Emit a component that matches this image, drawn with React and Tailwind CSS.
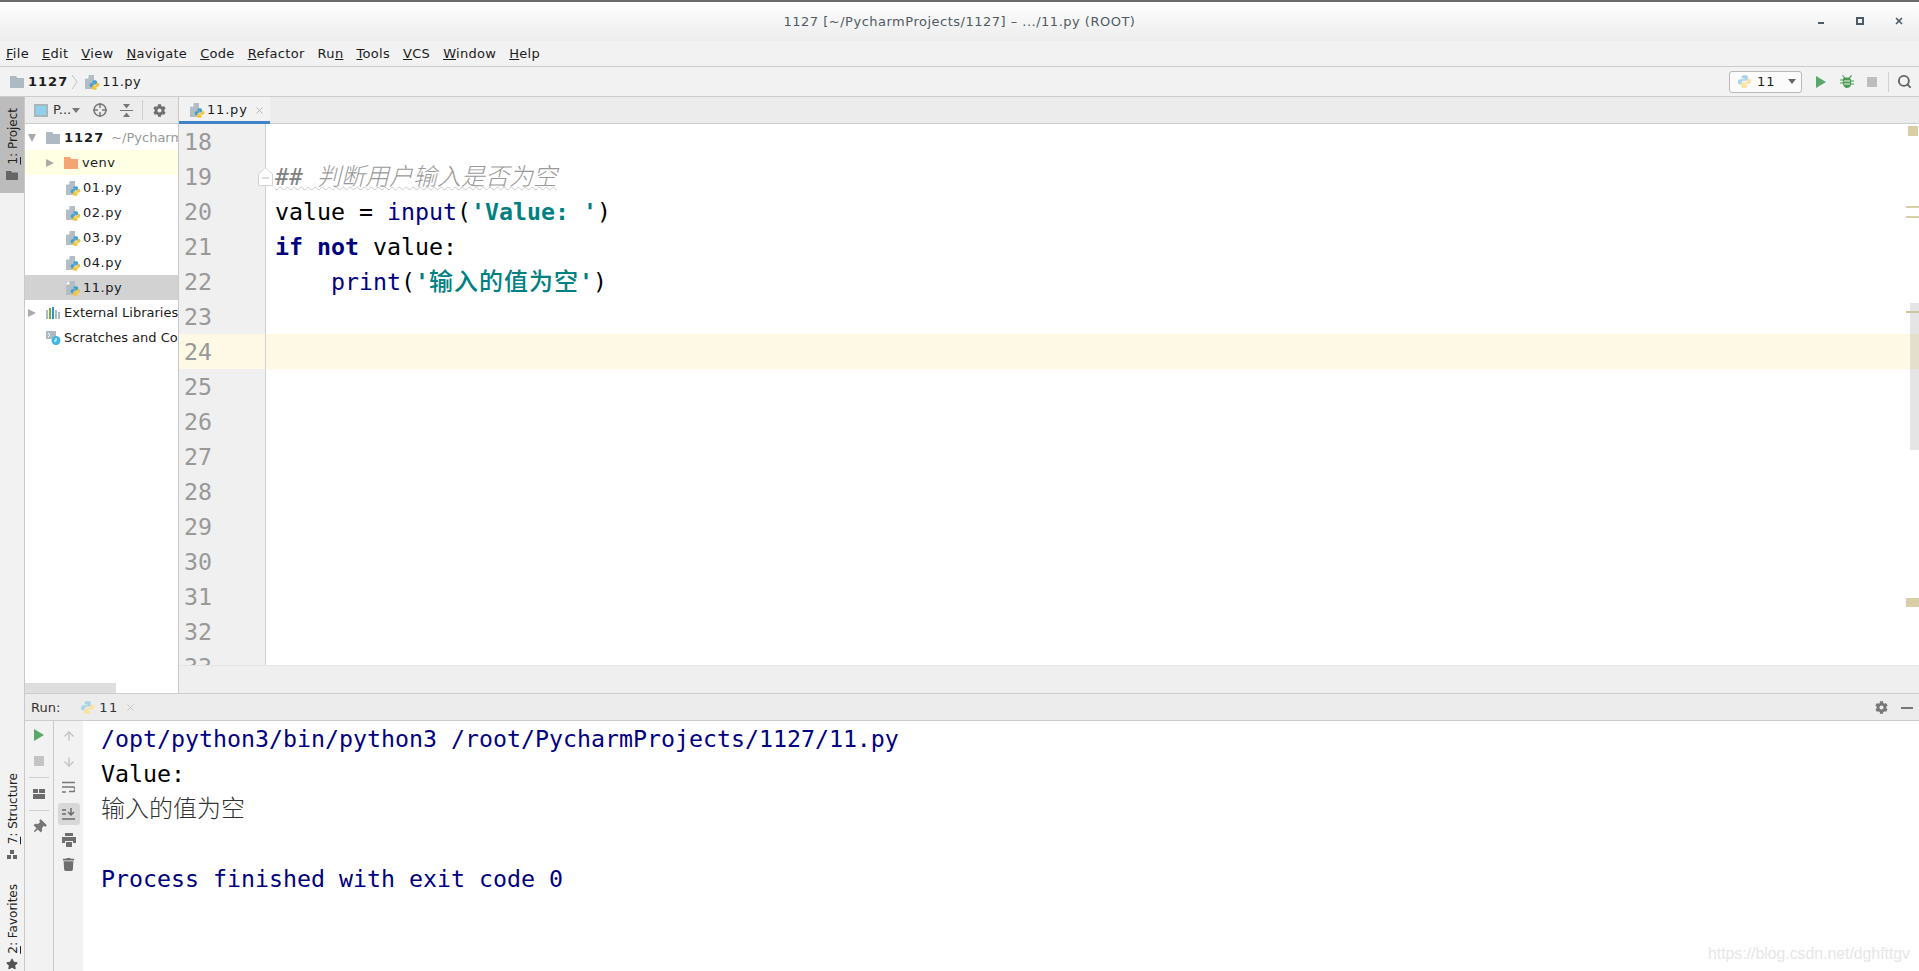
import { ArrowDown, ArrowUp, Search, X } from 'lucide-react'
import { FaCog, FaStar, FaThumbtack, FaTrash } from 'react-icons/fa'

const UI = "font-['DejaVu_Sans',sans-serif]"
const MONO = "font-['DejaVu_Sans_Mono','Noto_Sans_CJK_SC',monospace]"
const CJK = "font-['Noto_Sans_CJK_SC',sans-serif] text-[24px] font-light leading-none"

const MENU = [
  ['F', 'ile'],
  ['E', 'dit'],
  ['V', 'iew'],
  ['N', 'avigate'],
  ['C', 'ode'],
  ['R', 'efactor'],
  ['R', 'u', 'n'],
  ['T', 'ools'],
  ['V', 'CS'],
  ['W', 'indow'],
  ['H', 'elp'],
]

const LINES = [18, 19, 20, 21, 22, 23, 24, 25, 26, 27, 28, 29, 30, 31, 32, 33]
const FILES = ['01.py', '02.py', '03.py', '04.py']

function PyLogo({ className, faded }) {
  return (
    <svg viewBox="0 0 16 16" className={className}>
      <path
        d="M8 1C5.2 1 5 2.2 5 3v1.8h3.2v.7H3.4C2 5.5 1 6.6 1 8.2s1 2.9 2.4 2.9H5V9.4c0-1.2 1-2.2 2.2-2.2h2.6c1 0 1.8-.8 1.8-1.8V3c0-1.2-1.4-2-3.6-2z"
        fill={faded ? '#a9d3ea' : '#3f9ed1'}
      />
      <path
        d="M8 15c2.8 0 3-1.2 3-2v-1.8H7.8v-.7h4.8c1.4 0 2.4-1.1 2.4-2.7s-1-2.9-2.4-2.9H11v1.7c0 1.2-1 2.2-2.2 2.2H6.2c-1 0-1.8.8-1.8 1.8V13c0 1.2 1.4 2 3.6 2z"
        fill={faded ? '#f8e3a0' : '#f4c430'}
      />
    </svg>
  )
}

function PyFile() {
  return (
    <span className="relative block w-[14px] h-[16px] shrink-0">
      <svg viewBox="0 0 14 16" className="absolute left-0 top-0 w-[14px] h-[16px]">
        <path d="M4 1h5v14H0V5z" fill="#b3bdc5" />
        <path d="M3.4 1v3.4H0z" fill="#fff" />
      </svg>
      <PyLogo className="absolute left-[4px] top-[5px] w-[11px] h-[12px]" />
    </span>
  )
}

function Folder({ color = '#aebac3' }) {
  return (
    <svg viewBox="0 0 14 12" className="w-[14px] h-[12px] shrink-0">
      <path d="M0 0h6l1.5 2H14v10H0z" fill={color} />
    </svg>
  )
}

function Triangle({ open }) {
  return (
    <svg viewBox="0 0 8 8" className="w-[8px] h-[8px] shrink-0">
      <path d={open ? 'M0 0h8L4 8z' : 'M0 0l8 4-8 4z'} fill="#aaaaaa" />
    </svg>
  )
}

function Play({ className }) {
  return (
    <svg viewBox="0 0 10 12" className={className}>
      <path d="M0 0l10 6-10 6z" fill="#59a869" />
    </svg>
  )
}

function Bug() {
  return (
    <svg viewBox="0 0 14 14" className="w-[14px] h-[14px]">
      <path d="M3 0l2 2.5h4L11 0l1 .8-2 2.4c.7.6 1 1.400 1.200 2.300H14v1h-2.800v2H14v1h-2.900c-.3 2-1.900 3.500-4.100 3.500S3.200 11 2.900 8.500H0v-1h2.800v-2H0v-1h2.800c.2-.9.500-1.700 1.200-2.300L2 .8z" fill="#499c54" />
      <path d="M4 6h6M4 9h6" stroke="#f2f2f2" strokeWidth="1" />
    </svg>
  )
}

function StripeLabel({ under, rest, icon, className = '' }) {
  return (
    <div className={`flex flex-col items-center w-full ${className}`}>
      <span className={`${UI} text-[12px] text-[#222] rotate-180 [writing-mode:vertical-rl] whitespace-nowrap translate-x-px`}>
        <span className="underline">{under}</span>: {rest}
      </span>
      {icon}
    </div>
  )
}

function TitleBar() {
  return (
    <div className="relative h-[41px] shrink-0 border-t-2 border-[#6b6b6b] bg-gradient-to-b from-white to-[#ececec] flex items-center justify-center">
      <span className={`${UI} text-[13px] font-medium text-[#4f5b62] tracking-[0.5px]`}>
        1127 [~/PycharmProjects/1127] – .../11.py (ROOT)
      </span>
      <div className="absolute right-[15px] top-[15px] flex items-center h-[8px]">
        <span className="block w-[6px] h-[2px] bg-[#4a5a66] mt-[4px]" />
        <span className="block w-[8px] h-[8px] border-2 border-[#4a5a66] ml-[32px]" />
        <X size={10} strokeWidth={4} className="ml-[30px] text-[#4a5a66]" />
      </div>
    </div>
  )
}

function MenuBar() {
  return (
    <div className={`${UI} h-[25px] shrink-0 bg-[#f2f2f2] flex items-center pl-[6px] pt-px gap-[13px] text-[13px] text-[#1c1c1c] tracking-[0.3px]`}>
      {MENU.map(([a, b, c], i) => (
        <span key={i}>
          {c ? (
            <>
              {a}
              {b[0]}
              <span className="underline">{c}</span>
            </>
          ) : (
            <>
              <span className="underline">{a}</span>
              {b}
            </>
          )}
        </span>
      ))}
    </div>
  )
}

function NavBar() {
  return (
    <div className={`${UI} h-[31px] shrink-0 bg-[#f2f2f2] border-y border-[#cdcdcd] flex items-center pl-[10px] pr-[7px] text-[13px] text-[#1c1c1c]`}>
      <Folder />
      <span className="ml-[4px] font-bold tracking-[1px]">1127</span>
      <svg viewBox="0 0 6 14" className="w-[6px] h-[14px] ml-[4px] mr-[7px]">
        <path d="M0 0l5 7-5 7" fill="none" stroke="#c4c4c4" />
      </svg>
      <PyFile />
      <span className="ml-[3px] tracking-[0.5px]">11.py</span>
      <div className="ml-auto flex items-center">
        <div className="w-[73px] h-[22px] rounded-[3px] border border-[#b9b9b9] bg-[#fbfbfb] flex items-center pl-[7px] pr-[5px]">
          <PyLogo faded className="w-[15px] h-[15px]" />
          <span className="ml-[5px] tracking-[1px]">11</span>
          <svg viewBox="0 0 8 5" className="w-[8px] h-[5px] ml-auto">
            <path d="M0 0h8L4 5z" fill="#666" />
          </svg>
        </div>
        <Play className="w-[10px] h-[12px] ml-[14px]" />
        <span className="ml-[14px]">
          <Bug />
        </span>
        <span className="block w-[10px] h-[10px] bg-[#bdbdbd] ml-[13px]" />
        <span className="block w-px h-[20px] bg-[#d0d0d0] ml-[11px]" />
        <Search size={15} strokeWidth={3} className="ml-[8px] text-[#5e6468]" />
      </div>
    </div>
  )
}

function LeftStripe() {
  return (
    <div className="w-[25px] shrink-0 bg-[#f2f2f2] border-r border-[#c9c9c9] flex flex-col">
      <div className="h-[96px] bg-[#bcbcbc] flex flex-col items-center pt-[11px]">
        <span className={`${UI} text-[12px] text-[#222] rotate-180 [writing-mode:vertical-rl] whitespace-nowrap translate-x-px`}>
          <span className="underline">1</span>: Project
        </span>
        <svg viewBox="0 0 12 9" className="w-[12px] h-[9px] mt-[6px]">
          <path d="M0 0h5l1 1.500h6V9H0z" fill="#666" />
        </svg>
      </div>
      <div className="mt-auto flex flex-col items-center pb-[1px]">
        <StripeLabel
          under="7"
          rest="Structure"
          icon={
            <svg viewBox="0 0 10 9" className="w-[10px] h-[9px] mt-[6px]">
              <path d="M3 0h4v4H3zM0 5h4v4H0zM6 5h4v4H6z" fill="#666" />
            </svg>
          }
        />
        <StripeLabel
          className="mt-[25px]"
          under="2"
          rest="Favorites"
          icon={<FaStar size={12} className="mt-[4px] text-[#555]" />}
        />
      </div>
    </div>
  )
}

function TreeRow({ className, children }) {
  return <div className={`h-[25px] flex items-center whitespace-nowrap ${className}`}>{children}</div>
}

function ProjectPanel() {
  return (
    <div className="relative w-[154px] shrink-0 bg-white border-r border-[#c9c9c9] flex flex-col overflow-hidden">
      <div className={`${UI} h-[27px] shrink-0 bg-[#ececec] border-b border-[#cdcdcd] flex items-center pl-[9px] text-[13px] text-[#333]`}>
        <span className="block w-[14px] h-[13px] border-2 border-[#a9b4bb] bg-[#8fd0ec]" />
        <span className="ml-[5px]">P...</span>
        <svg viewBox="0 0 8 5" className="w-[8px] h-[5px] ml-[1px]">
          <path d="M0 0h8L4 5z" fill="#777" />
        </svg>
        <svg viewBox="0 0 14 14" className="w-[14px] h-[14px] ml-[13px]">
          <circle cx="7" cy="7" r="6" fill="none" stroke="#777" strokeWidth="1.500" />
          <path d="M7 0v5M7 9v5M0 7h5M9 7h5" stroke="#777" strokeWidth="1.500" />
        </svg>
        <svg viewBox="0 0 13 13" className="w-[13px] h-[13px] ml-[13px]">
          <path d="M0 6.500h13" stroke="#777" />
          <path d="M3 0h7L6.500 4.500zM3 13h7L6.500 8.500z" fill="#777" />
        </svg>
        <span className="block w-px h-[20px] bg-[#d0d0d0] ml-[9px]" />
        <FaCog size={13} className="ml-[10px] text-[#6f6f6f]" />
      </div>
      <div className={`${UI} pt-px text-[13px] text-[#1c1c1c]`}>
        <TreeRow className="pl-[3px]">
          <Triangle open />
          <span className="ml-[10px]">
            <Folder />
          </span>
          <span className="ml-[4px] font-bold tracking-[1px]">1127</span>
          <span className="ml-[7px] text-[13px] text-[#999]">~/PycharmProjects</span>
        </TreeRow>
        <TreeRow className="pl-[21px] bg-[#ffffe4]">
          <Triangle />
          <span className="ml-[10px]">
            <Folder color="#f4a574" />
          </span>
          <span className="ml-[4px] tracking-[0.4px]">venv</span>
        </TreeRow>
        {FILES.map((f) => (
          <TreeRow key={f} className="pl-[41px]">
            <PyFile />
            <span className="ml-[3px] tracking-[0.5px]">{f}</span>
          </TreeRow>
        ))}
        <TreeRow className="pl-[41px] bg-[#d2d2d2]">
          <PyFile />
          <span className="ml-[3px] tracking-[0.5px]">11.py</span>
        </TreeRow>
        <TreeRow className="pl-[3px]">
          <Triangle />
          <svg viewBox="0 0 14 12" className="w-[14px] h-[12px] ml-[10px] shrink-0">
            <path d="M0 3h2v9H0zM9 3h2v9H9zM12 5h2v7h-2z" fill="#aebac3" />
            <path d="M3 1h2v11H3z" fill="#62b543" />
            <path d="M6 0h2v12H6z" fill="#3592c4" />
          </svg>
          <span className="ml-[4px]">External Libraries</span>
        </TreeRow>
        <TreeRow className="pl-[21px]">
          <svg viewBox="0 0 15 14" className="w-[15px] h-[14px] shrink-0">
            <path d="M0 0h10v8H0z" fill="#aebac3" />
            <path d="M2 2l2 2-2 2" fill="none" stroke="#fff" />
            <circle cx="10" cy="9.500" r="4.500" fill="#40b6e0" />
            <path d="M10 7v3h-2" fill="none" stroke="#fff" />
          </svg>
          <span className="ml-[3px]">Scratches and Consoles</span>
        </TreeRow>
      </div>
      <div className="absolute left-0 bottom-0 w-[91px] h-[10px] bg-[#dedede]" />
    </div>
  )
}

function CodeLine({ children }) {
  return <div className="h-[35px] leading-[35px] whitespace-pre">{children}</div>
}

function Editor() {
  return (
    <div className="flex-1 min-w-0 flex flex-col">
      <div className={`${UI} h-[27px] shrink-0 bg-[#ececec] border-b border-[#cdcdcd] flex`}>
        <div className="w-[91px] bg-[#f2f2f2] border-b-[3px] border-[#4083c9] flex items-center pl-[11px] pt-[2px] text-[13px] text-[#1c1c1c] -mb-px">
          <PyFile />
          <span className="ml-[3px] tracking-[0.8px]">11.py</span>
          <X size={11} className="ml-[6px] text-[#b5b5b5]" />
        </div>
      </div>
      <div className={`${MONO} relative flex-1 min-h-0 flex overflow-hidden bg-white text-[23.25px]`}>
        <div className="w-[87px] shrink-0 bg-[#f0f0f0] border-r border-[#d0d0d0] text-[#999]">
          {LINES.map((n) => (
            <div key={n} className={`h-[35px] leading-[35px] pl-[5px] ${n === 24 ? 'bg-[#fef9e4]' : ''}`}>
              {n}
            </div>
          ))}
        </div>
        <div className="flex-1 min-w-0 text-black">
          <CodeLine> </CodeLine>
          <CodeLine>
            <span className="ml-[9px] italic text-[#808080] underline decoration-wavy decoration-1 decoration-[#c9c9c9]">
              ## <span className={`${CJK} text-[#9a9a9a]`}>判断用户输入是否为空</span>
            </span>
          </CodeLine>
          <CodeLine>
            <span className="ml-[9px]">value = </span>
            <span className="text-[#000080]">input</span>(
            <span className="font-bold text-[#008080]">'Value: '</span>)
          </CodeLine>
          <CodeLine>
            <span className="ml-[9px] font-bold text-[#000080]">if not</span> value:
          </CodeLine>
          <CodeLine>
            <span className="ml-[9px]">    </span>
            <span className="text-[#000080]">print</span>(
            <span className="font-bold text-[#008080]">
              '<span className="font-['Noto_Sans_CJK_SC',sans-serif] text-[24px] font-medium leading-none tracking-[1px]">输入的值为空</span>'
            </span>
            )
          </CodeLine>
          <CodeLine> </CodeLine>
          <div className="h-[35px] bg-[#fef9e4]" />
        </div>
        {/* fold marker and error stripe sit over the editor */}
        <svg viewBox="0 0 15 19" className="absolute left-[79px] top-[43px] w-[15px] h-[19px]">
          <path d="M.5 7L7.500.7 14.500 7v11.500H.5z" fill="#fff" stroke="#d5d5d5" />
          <path d="M4 11h7" stroke="#bbb" />
        </svg>
        <div className="absolute right-0 top-[179px] w-[9px] h-[147px] bg-black/10" />
        <div className="absolute right-[1px] top-[2px] w-[10px] h-[10px] bg-[#d9cea6]" />
        <div className="absolute right-0 top-[82px] w-[13px] h-[2px] bg-[#d9cea6]" />
        <div className="absolute right-0 top-[92px] w-[13px] h-[2px] bg-[#d9cea6]" />
        <div className="absolute right-0 top-[187px] w-[13px] h-[2px] bg-[#d0c49c]" />
        <div className="absolute right-0 top-[474px] w-[13px] h-[9px] bg-[#d9cea6]" />
      </div>
      <div className="h-[28px] shrink-0 bg-[#efefef] border-t border-[#e4e4e4]" />
    </div>
  )
}

function RunPanel() {
  return (
    <div className="h-[278px] shrink-0 flex flex-col bg-white relative">
      <div className={`${UI} h-[28px] shrink-0 bg-[#ececec] border-y border-[#cdcdcd] flex items-center pl-[6px] pr-[6px] pt-px text-[13px] text-[#333]`}>
        <span>Run:</span>
        <PyLogo faded className="w-[15px] h-[15px] ml-[20px]" />
        <span className="ml-[4px] tracking-[1.5px]">11</span>
        <X size={11} className="ml-[6px] text-[#c4c4c4]" />
        <FaCog size={13} className="ml-auto text-[#777]" />
        <span className="block w-[12px] h-[2px] bg-[#777] ml-[13px]" />
      </div>
      <div className="flex-1 min-h-0 flex">
        <div className="w-[29px] shrink-0 bg-[#f2f2f2] border-r border-[#c9c9c9] flex flex-col items-center pt-[8px]">
          <Play className="w-[10px] h-[12px]" />
          <span className="block w-[10px] h-[10px] bg-[#c4c4c4] mt-[15px]" />
          <span className="block w-[20px] h-px bg-[#d0d0d0] mt-[11px]" />
          <svg viewBox="0 0 12 10" className="w-[12px] h-[10px] mt-[11px]">
            <path d="M0 0h5v4H0zM6 0h6v4H6zM0 5h12v5H0z" fill="#6b6b6b" />
          </svg>
          <span className="block w-[20px] h-px bg-[#d0d0d0] mt-[11px]" />
          <FaThumbtack size={14} className="mt-[9px] rotate-45 text-[#777]" />
        </div>
        <div className="w-[29px] shrink-0 bg-[#f2f2f2] flex flex-col items-center pt-[8px] text-[#c4c4c4]">
          <ArrowUp size={14} strokeWidth={2.5} />
          <ArrowDown size={14} strokeWidth={2.5} className="mt-[12px]" />
          <svg viewBox="0 0 13 13" className="w-[13px] h-[13px] mt-[12px] text-[#777]">
            <path d="M0 1.500h13M0 6h11a2 2 0 0 1 0 4.500H7M0 11h4" fill="none" stroke="currentColor" strokeWidth="1.500" />
          </svg>
          <div className="w-[22px] h-[22px] mt-[9px] rounded-[3px] bg-[#d8d8d8] flex items-center justify-center">
            <svg viewBox="0 0 13 12" className="w-[13px] h-[12px]">
              <path d="M0 11h13M0 2h4M0 6h4M9 0v6M6 4l3 3 3-3" fill="none" stroke="#6b6b6b" strokeWidth="1.500" />
            </svg>
          </div>
          <svg viewBox="0 0 14 14" className="w-[14px] h-[14px] mt-[8px]">
            <path d="M3 0h8v3H3zM0 4h14v6h-3V8H3v2H0zM4 9h6v5H4z" fill="#6f6f6f" />
          </svg>
          <FaTrash size={13} className="mt-[11px] text-[#6f6f6f]" />
        </div>
        <div className={`${MONO} flex-1 pl-[18px] text-[23.25px] text-black`}>
          <CodeLine>
            <span className="text-[#000080]">/opt/python3/bin/python3 /root/PycharmProjects/1127/11.py</span>
          </CodeLine>
          <CodeLine>Value:</CodeLine>
          <CodeLine>
            <span className={`${CJK} text-[#333]`}>输入的值为空</span>
          </CodeLine>
          <CodeLine> </CodeLine>
          <CodeLine>
            <span className="text-[#000080]">Process finished with exit code 0</span>
          </CodeLine>
        </div>
      </div>
      <span className="absolute right-[9px] bottom-[5px] font-['Liberation_Sans',sans-serif] text-[15.8px] text-[#e6e6e6]">
        https://blog.csdn.net/dghfttgv
      </span>
    </div>
  )
}

export default function App() {
  return (
    <div className="w-[1919px] h-[971px] flex flex-col overflow-hidden bg-[#f2f2f2]">
      <TitleBar />
      <MenuBar />
      <NavBar />
      <div className="flex-1 min-h-0 flex">
        <LeftStripe />
        <div className="flex-1 min-w-0 flex flex-col">
          <div className="flex-1 min-h-0 flex">
            <ProjectPanel />
            <Editor />
          </div>
          <RunPanel />
        </div>
      </div>
    </div>
  )
}
